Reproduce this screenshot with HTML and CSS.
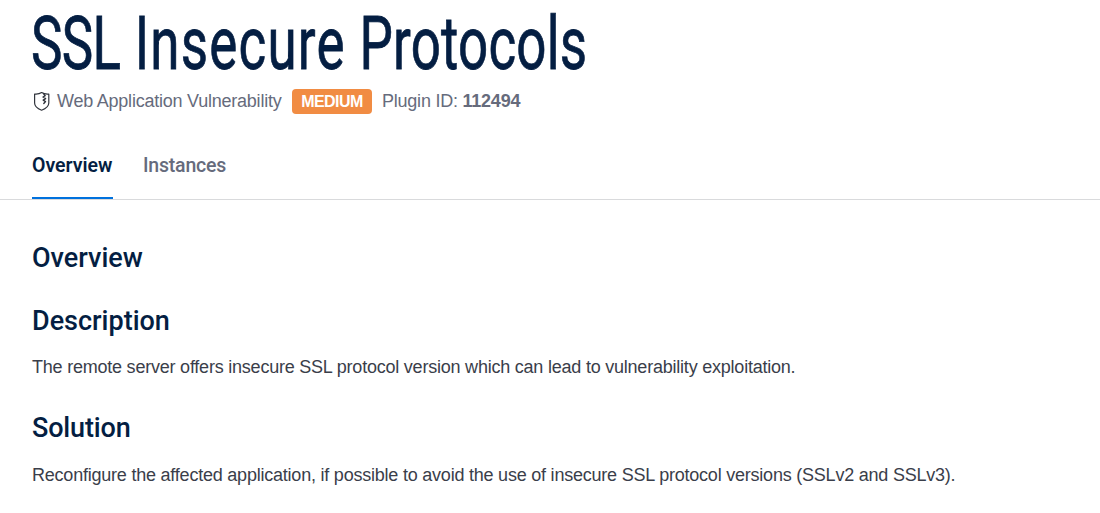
FILE: index.html
```html
<!DOCTYPE html>
<html lang="en">
<head>
<meta charset="utf-8">
<title>SSL Insecure Protocols</title>
<link rel="stylesheet" href="styles.css">
</head>
<body>
<header class="header">
  <h1 class="title"><span class="title-text"><span class="word-ssl">SSL</span> <span class="word-insecure">Insecure</span> <span class="word-protocols">Protocols</span></span></h1>
  <div class="meta">
    <svg class="shield" width="18" height="20" viewBox="0 0 18 20" fill="none" stroke="#30343c" stroke-width="1.2" stroke-linejoin="round" stroke-linecap="round">
      <path d="M9.6 1.6C7.8 2.8 5 3.2 2.6 3V12C2.6 15.5 6 17.8 9.6 19.2C13.2 17.8 16.8 15.5 16.8 12V3C14.4 3.2 11.6 2.8 9.6 1.6Z"/>
      <path d="M11.6 2.8L13.2 4.6L11 6L13.6 7.6L11.2 9.2L13.5 10.6L11.8 12.4" stroke-width="1.4"/>
    </svg>
    <span class="type">Web Application Vulnerability</span>
    <span class="badge">MEDIUM</span>
    <span class="plugin">Plugin ID: <strong>112494</strong></span>
  </div>
</header>
<nav class="tabs">
  <a class="tab tab-active"><span class="tab-label">Overview</span></a>
  <a class="tab"><span class="tab-label">Instances</span></a>
</nav>
<main class="content">
  <h2 class="heading overview">Overview</h2>
  <h2 class="heading description">Description</h2>
  <p class="text first">The remote server offers insecure SSL protocol version which can lead to vulnerability exploitation.</p>
  <h2 class="heading solution">Solution</h2>
  <p class="text second">Reconfigure the affected application, if possible to avoid the use of insecure SSL protocol versions (SSLv2 and SSLv3).</p>
</main>
</body>
</html>
```
FILE: styles.css
```css
* { box-sizing: border-box; }
body { margin: 0; background: #fff; font-family: "Liberation Sans", Arial, sans-serif; font-size: 18px; color: #3a3e4a; }
h1, h2, p { margin: 0; }
.header { padding: 0 32px; height: 131px; }
.title { height: 88px; margin-left: -1px; line-height: 88px; font-family: Roboto, sans-serif; font-size: 74.5px; font-weight: 400; color: #041e42; white-space: nowrap; }
.title-text { display: inline-block; transform: scaleX(0.71); transform-origin: 0 0; -webkit-text-stroke: 0.8px #041e42; }
.word-ssl { letter-spacing: -1px; margin-right: 2px; }
.word-insecure { letter-spacing: 1.7px; margin-right: 1px; }
.word-protocols { letter-spacing: 0.3px; }
.meta { display: flex; align-items: center; height: 26px; color: #666b7c; white-space: nowrap; letter-spacing: -0.23px; }
.shield { width: 18px; height: 20px; margin-right: 7px; flex: none; }
.type { width: 225px; margin-right: 10px; }
.badge { width: 80px; height: 25px; margin-right: 10px; border-radius: 4px; background: #f18c43; color: #fff; font-size: 16px; font-weight: 700; letter-spacing: -0.55px; line-height: 25px; text-align: center; }
.tabs { display: flex; gap: 30px; height: 69px; padding: 0 32px; border-bottom: 1px solid #d9dadc; font-family: Roboto, sans-serif; font-size: 19.5px; font-weight: 500; line-height: 70px; color: #666b7c; }
.tab { height: 68px; white-space: nowrap; letter-spacing: -0.2px; }
.tab-active { width: 81px; color: #041e42; font-weight: 600; letter-spacing: 0; border-bottom: 2px solid #0071dd; }
.content { padding: 40px 32px 0; }
.heading { font-family: Roboto, sans-serif; font-size: 27px; font-weight: 500; line-height: 36px; color: #041e42; white-space: nowrap; }
.text { line-height: 26px; letter-spacing: -0.22px; white-space: nowrap; }
.description { margin-top: 27px; }
.first { margin-top: 15px; }
.solution { margin-top: 30px; letter-spacing: -0.15px; }
.second { margin-top: 16px; }
```
